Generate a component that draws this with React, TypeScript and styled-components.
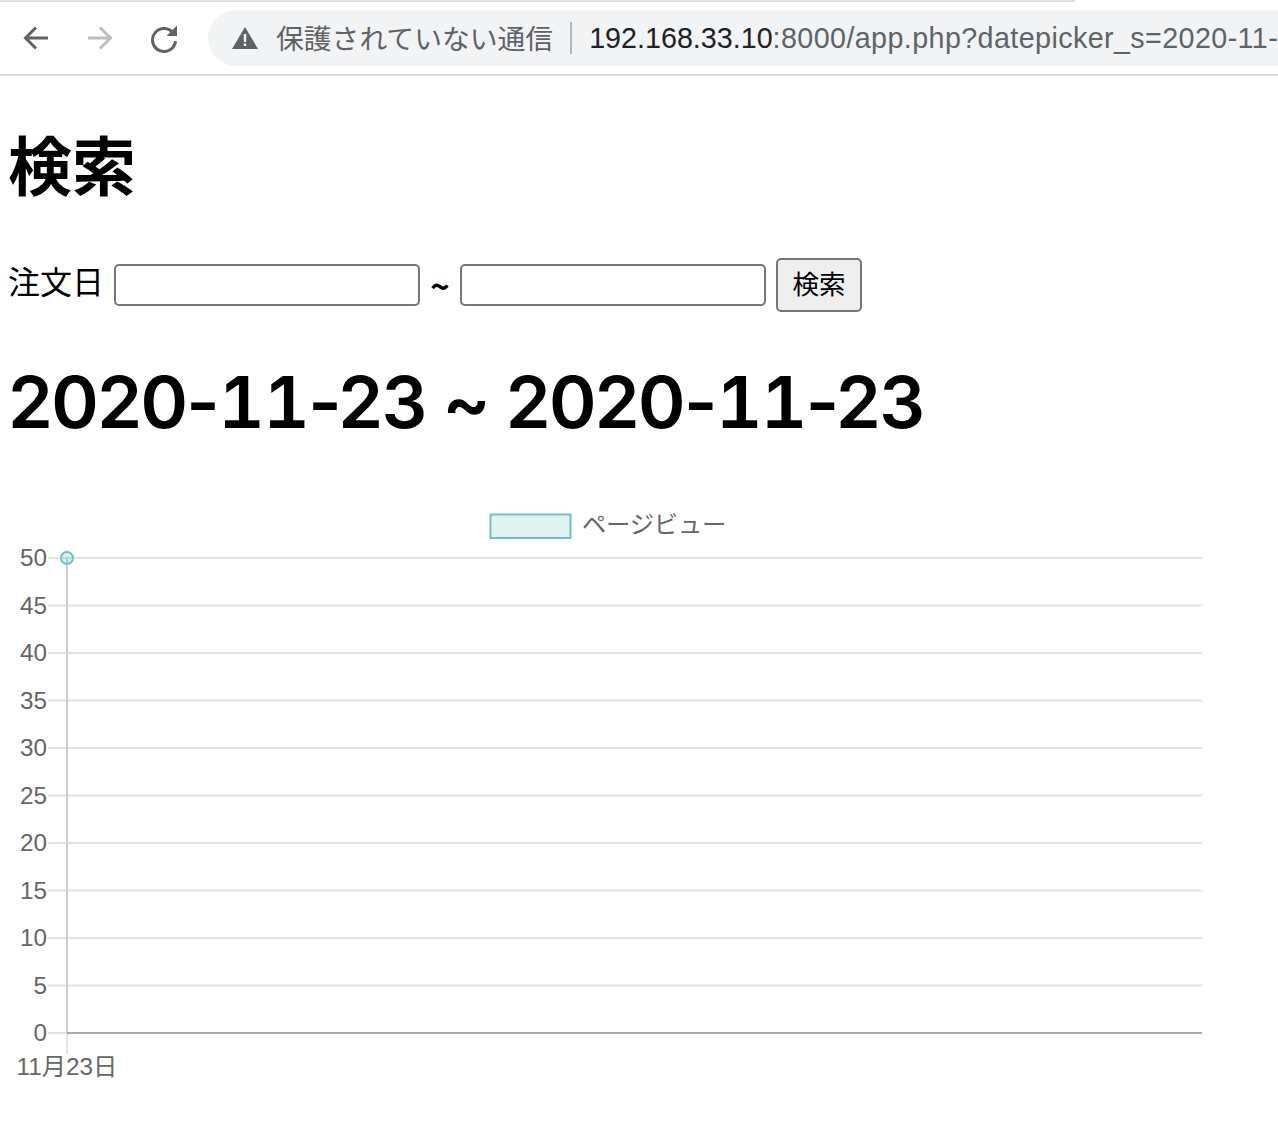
import React from "react";
import styled, { createGlobalStyle } from "styled-components";

const GlobalStyle = createGlobalStyle`
  html, body {
    margin: 0;
    padding: 0;
    background: #ffffff;
    overflow: hidden;
  }
`;

const CJK = `"Liberation Sans", "Noto Sans CJK JP", sans-serif`;

const Page = styled.div`
  width: 1278px;
  height: 1148px;
  overflow: hidden;
  font-family: ${CJK};
  color: #000000;
`;

const TabEdge = styled.div`
  width: 1075px;
  height: 2px;
  background: #e0e1e4;
`;

const Toolbar = styled.div`
  display: flex;
  align-items: center;
  height: 72px;
  padding: 0 0 0 21px;
  border-bottom: 2px solid #dcdcde;
  box-sizing: content-box;
`;

const NavButton = styled.div`
  width: 32px;
  height: 32px;
  margin-right: 32px;
  flex: none;
  svg {
    display: block;
  }
`;

const Omnibox = styled.div`
  display: flex;
  align-items: center;
  flex: 1;
  min-width: 0;
  height: 56px;
  margin-left: -5px;
  padding-left: 24px;
  background: #f1f3f4;
  border-radius: 28px 0 0 28px;
  white-space: nowrap;
  overflow: hidden;
`;

const Warning = styled.span`
  color: #5f6368;
  font-size: 27.8px;
  margin: -2px 0 0 18px;
  font-family: "Noto Sans CJK JP", sans-serif;
`;

const Divider = styled.span`
  flex: none;
  width: 2px;
  height: 32px;
  margin: 0 17px 0 17px;
  background: #b4b6b9;
`;

const Host = styled.span`
  color: #202124;
  font-size: 28.7px;
`;

const UrlRest = styled.span`
  color: #5f6368;
  font-size: 28.7px;
  letter-spacing: 0.4px;
`;

const Content = styled.div`
  padding: 0 8px;
`;

const Title = styled.h1`
  margin: 46px 0 0;
  font-size: 64px;
  line-height: 80px;
  font-weight: 700;
  font-family: "Noto Sans CJK JP", sans-serif;
`;

const SearchForm = styled.form`
  display: flex;
  align-items: center;
  height: 54px;
  margin-top: 56px;
`;

const FieldLabel = styled.label`
  font-size: 32px;
  font-family: "Noto Sans CJK JP", sans-serif;
  margin: -10px 10px 0 0;
`;

const DateInput = styled.input`
  box-sizing: border-box;
  width: 306px;
  height: 42px;
  padding: 0;
  background: #ffffff;
  border: 2px solid #767676;
  border-radius: 5px;
`;

const Tilde = styled.span`
  width: 40px;
  text-align: center;
  font-size: 33px;
  font-weight: 700;
  font-family: "Noto Sans CJK JP", sans-serif;
`;

const SearchButton = styled.button`
  box-sizing: border-box;
  width: 86px;
  height: 54px;
  margin-left: 10px;
  padding: 0 0 6px;
  background: #efefef;
  border: 2px solid #767676;
  border-radius: 5px;
  color: #000000;
  font-size: 26.6px;
  font-family: "Noto Sans CJK JP", sans-serif;
`;

const Range = styled.h1`
  margin: 45px 0 0;
  font-size: 72px;
  line-height: 90px;
  font-weight: 600;
  letter-spacing: -1.6px;
  font-family: Inter, "Noto Sans CJK JP", sans-serif;
  white-space: nowrap;
`;

const WideOnes = styled.span`
  font-variant-numeric: tabular-nums;
`;

const ChartBox = styled.div`
  margin-top: 57px;
  svg {
    display: block;
  }
`;

const ChartText = styled.text`
  fill: #666666;
  font-size: 24.3px;
  font-family: ${CJK};
`;

const LegendText = styled(ChartText)`
  letter-spacing: -0.2px;
`;

const LEFT = 67;
const RIGHT = 1202;
const TOP = 54;
const STEP = 47.5;
const ticks = [50, 45, 40, 35, 30, 25, 20, 15, 10, 5, 0];

const Chart = () => (
  <svg width={1278} height={600} viewBox="0 0 1278 600">
    {ticks.map((t, i) => {
      const y = TOP + i * STEP;
      return (
        <g key={t}>
          <line
            x1={48}
            x2={t === 0 ? LEFT : RIGHT}
            y1={y}
            y2={y}
            stroke="#e3e3e3"
            strokeWidth={2}
          />
          <ChartText x={47} y={y + 8} textAnchor="end">
            {t}
          </ChartText>
        </g>
      );
    })}
    <line x1={LEFT} x2={LEFT} y1={TOP} y2={TOP + 475} stroke="#cccccc" strokeWidth={2} />
    <line x1={LEFT} x2={LEFT} y1={TOP + 475} y2={TOP + 496} stroke="#e5e5e5" strokeWidth={2} />
    <line x1={LEFT} x2={RIGHT} y1={TOP + 475} y2={TOP + 475} stroke="#a9a9a9" strokeWidth={2} />
    <circle cx={LEFT} cy={TOP} r={6} fill="rgba(75,192,192,0.2)" stroke="#6cc3c3" strokeWidth={2} />
    <rect x={490.5} y={10.5} width={80} height={23.5} fill="#e2f1f1" stroke="#6cc3c3" strokeWidth={2} />
    <LegendText x={582} y={29}>ページビュー</LegendText>
    <ChartText x={LEFT} y={571} textAnchor="middle">11月23日</ChartText>
  </svg>
);

const App = () => (
  <Page>
    <GlobalStyle />
    <TabEdge />
    <Toolbar>
      <NavButton>
        <svg width={32} height={32} viewBox="0 0 32 32" fill="none" stroke="#5f6368" strokeWidth={3}>
          <path d="M27 16H5M15 5.5 4.5 16 15 26.5" />
        </svg>
      </NavButton>
      <NavButton>
        <svg width={32} height={32} viewBox="0 0 32 32" fill="none" stroke="#bcbec1" strokeWidth={3}>
          <path d="M3 16h22M15 5.5 25.5 16 15 26.5" />
        </svg>
      </NavButton>
      <NavButton>
        <svg width={32} height={32} viewBox="0 0 32 32" fill="none">
          <path d="M24.5 11.5A11.5 11.5 0 1 0 26.5 19" stroke="#5f6368" strokeWidth={3} />
          <path d="M28 3.5V14H17.5z" fill="#5f6368" />
        </svg>
      </NavButton>
      <Omnibox>
        <svg width={26} height={24} viewBox="0 0 26 24" style={{ flex: "none" }}>
          <path d="M13 1 26 23H0z" fill="#5f6368" />
          <path d="M11.8 8h2.4v8h-2.4zM11.8 17.5h2.4v2.6h-2.4z" fill="#f1f3f4" />
        </svg>
        <Warning>保護されていない通信</Warning>
        <Divider />
        <Host>192.168.33.10</Host>
        <UrlRest>:8000/app.php?datepicker_s=2020-11-</UrlRest>
      </Omnibox>
    </Toolbar>
    <Content>
      <Title>検索</Title>
      <SearchForm>
        <FieldLabel>注文日</FieldLabel>
        <DateInput type="text" />
        <Tilde>~</Tilde>
        <DateInput type="text" />
        <SearchButton type="button">検索</SearchButton>
      </SearchForm>
      <Range>
        2020-<WideOnes>11</WideOnes>-23 ~ 2020-<WideOnes>11</WideOnes>-23
      </Range>
    </Content>
    <ChartBox>
      <Chart />
    </ChartBox>
  </Page>
);

export default App;
